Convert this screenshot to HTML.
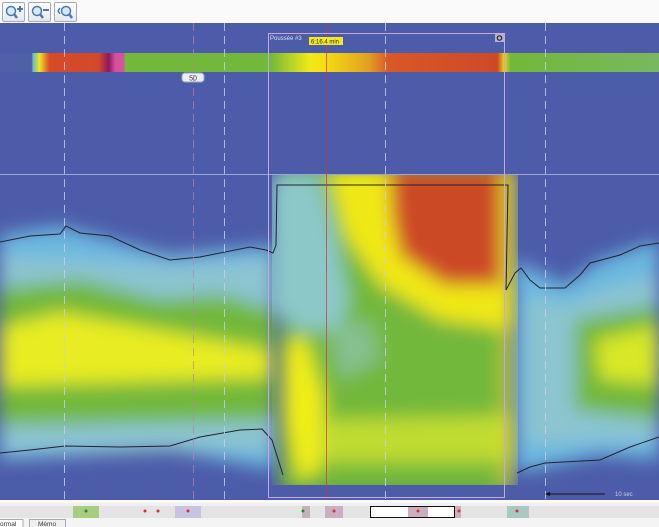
<!DOCTYPE html>
<html><head><style>
body{margin:0;width:659px;height:527px;overflow:hidden;background:#f0f0f0;font-family:"Liberation Sans",sans-serif;position:relative}
.tb{position:absolute;left:0;top:0;width:659px;height:23px;background:#fafafa;border-bottom:1px solid #ccc}
.btn{position:absolute;top:2px;width:21px;height:18px;border:1px solid #aab;border-radius:2px;background:linear-gradient(#fff,#e4e8ee)}
</style></head><body>
<div class="tb">
<div class="btn" style="left:2px"><svg width="21" height="18"><circle cx="8" cy="8" r="4.5" fill="#d8eaf8" stroke="#4a7ab8" stroke-width="1.5"/><line x1="11" y1="11" x2="14" y2="15" stroke="#4a7ab8" stroke-width="2.5"/><path d="M14 6h6M17 3v6" stroke="#3a6ab0" stroke-width="1.8"/></svg></div>
<div class="btn" style="left:28px"><svg width="21" height="18"><circle cx="8" cy="8" r="4.5" fill="#d8eaf8" stroke="#4a7ab8" stroke-width="1.5"/><line x1="11" y1="11" x2="14" y2="15" stroke="#4a7ab8" stroke-width="2.5"/><path d="M14 7h6" stroke="#3a6ab0" stroke-width="1.8"/></svg></div>
<div class="btn" style="left:54px"><svg width="21" height="18"><circle cx="11" cy="8" r="4.5" fill="#d8eaf8" stroke="#4a7ab8" stroke-width="1.5"/><line x1="14" y1="11" x2="17" y2="15" stroke="#4a7ab8" stroke-width="2.5"/><path d="M5 5l-2 3 2 3" fill="none" stroke="#3a6ab0" stroke-width="1.2"/></svg></div>
</div>
<svg style="position:absolute;left:0;top:23px" width="659" height="504" viewBox="0 23 659 504">
<defs>
<filter id="b" x="-20%" y="-20%" width="140%" height="140%"><feGaussianBlur stdDeviation="9"/></filter>
<filter id="b2" x="-30%" y="-30%" width="160%" height="160%"><feGaussianBlur stdDeviation="9"/></filter>
<clipPath id="cc"><rect x="272" y="175" width="246" height="310"/></clipPath>
<linearGradient id="bar" x1="0" x2="1">
<stop offset="0" stop-color="#5060a8"/><stop offset="0.048" stop-color="#5060a8"/>
<stop offset="0.05" stop-color="#6ab8d0"/><stop offset="0.06" stop-color="#e8e820"/><stop offset="0.075" stop-color="#d84a28"/>
<stop offset="0.15" stop-color="#d04a2a"/><stop offset="0.165" stop-color="#8a1a5a"/><stop offset="0.175" stop-color="#d850a0"/>
<stop offset="0.188" stop-color="#d850a0"/><stop offset="0.19" stop-color="#72b83a"/>
<stop offset="0.41" stop-color="#72b83a"/><stop offset="0.47" stop-color="#f0ea18"/><stop offset="0.49" stop-color="#f4e010"/>
<stop offset="0.56" stop-color="#e0a020"/><stop offset="0.59" stop-color="#d85828"/><stop offset="0.755" stop-color="#cc4a28"/>
<stop offset="0.765" stop-color="#f0d018"/><stop offset="0.775" stop-color="#72b83a"/><stop offset="1" stop-color="#78b860"/>
</linearGradient>
</defs>
<rect x="0" y="23" width="659" height="477" fill="#4c5ca8"/>
<rect x="0" y="53" width="659" height="19" fill="url(#bar)"/>
<rect x="182" y="73" width="22" height="9" rx="3" fill="#e8eef4" stroke="#9ab"/>
<text x="193" y="80.5" font-size="7" text-anchor="middle" fill="#333">50</text>
<line x1="0" y1="174.5" x2="659" y2="174.5" stroke="#9aa6d8"/>
<rect x="0" y="175" width="659" height="310" fill="#4c5ca8"/>
<g filter="url(#b)">
<path d="M0 235 L60 226 L170 255 L275 245 L275 470 L170 450 L0 460Z" fill="#6ab8e0"/>
<path d="M0 255 L170 265 L275 258 L275 450 L0 452Z" fill="#8cc4d0"/>
<path d="M0 288 L80 280 L160 300 L220 295 L275 310 L275 420 L0 425Z" fill="#72b83a"/>
<path d="M0 328 L60 312 L160 330 L270 350 L270 378 L0 386Z" fill="#e8ec20"/>
<path d="M515 260 L565 285 L600 260 L659 240 L659 460 L600 455 L530 470 L515 470Z" fill="#6ab8e0"/>
<path d="M525 295 L565 305 L600 290 L659 275 L659 440 L525 445Z" fill="#8cc4d0"/>
<path d="M575 320 L659 305 L659 420 L575 410Z" fill="#72b83a"/>
<path d="M595 340 L659 325 L659 385 L600 380Z" fill="#d8e828"/>
</g>
<g clip-path="url(#cc)">
<g filter="url(#b2)">
<rect x="280" y="165" width="232" height="330" fill="#72b83a"/>
<path d="M270 175 L318 175 L335 235 L350 300 L340 330 L300 330 L270 310Z" fill="#8cc8c8"/>
<path d="M330 330 L370 320 L380 360 L340 380Z" fill="#86c090"/>
<path d="M285 345 L305 335 L325 400 L320 470 L298 480 L285 420Z" fill="#f0ee18"/>
<path d="M320 420 L515 415 L515 462 L320 462Z" fill="#c0dc30"/>
<path d="M328 170 L515 170 L515 330 L440 320 L380 285 L345 235Z" fill="#f0e818"/>
<path d="M390 170 L502 170 L502 285 L445 285 L400 255 L392 215Z" fill="#cc4a26"/>
<path d="M504 170 L512 170 L512 490 L504 490Z" fill="#e8e020"/>
</g>
</g>
<path d="M0 242 L30 236 L60 234 L66 226 L80 233 L110 236 L140 250 L170 260 L200 257 L250 247 L266 250 L273 253 L276 245 L277 185 L508 185 L506 290 L515 273 L521 268 L530 280 L540 288 L565 288 L580 275 L590 263 L620 255 L640 246 L659 243" fill="none" stroke="#223" stroke-width="1"/>
<path d="M0 453 L30 450 L65 446 L120 447 L170 446 L200 437 L240 430 L262 429 L272 440 L283 475" fill="none" stroke="#223" stroke-width="1"/>
<path d="M517 473 L530 467 L545 463 L600 460 L630 447 L659 437" fill="none" stroke="#223" stroke-width="1"/>
<g stroke="#c8d0f0" stroke-dasharray="8,5" stroke-width="1" opacity="0.8">
<line x1="64.5" y1="23" x2="64.5" y2="500"/><line x1="224.5" y1="23" x2="224.5" y2="500"/>
<line x1="385.5" y1="23" x2="385.5" y2="500"/><line x1="545.5" y1="23" x2="545.5" y2="500"/>
</g>
<line x1="193.5" y1="23" x2="193.5" y2="500" stroke="#c080b0" stroke-dasharray="8,5" opacity="0.7"/>
<line x1="326.5" y1="23" x2="326.5" y2="500" stroke="#d83040" opacity="0.7"/>
<rect x="268.5" y="33.5" width="236" height="464" fill="none" stroke="#c8a8d8"/>
<text x="270" y="40" font-size="6" fill="#dde">Poussée #3</text>
<rect x="309" y="37" width="34" height="8" fill="#f4e820"/>
<text x="311" y="43.5" font-size="6" fill="#333">6:16.4 min</text>
<rect x="495" y="34" width="9" height="8" fill="#b8b0d0"/><circle cx="499.5" cy="38" r="2.2" fill="none" stroke="#222" stroke-width="1.2"/>
<line x1="547" y1="494" x2="605" y2="494" stroke="#111"/><path d="M545 494 L550 492 L550 496Z" fill="#111"/>
<text x="615" y="496" font-size="6" fill="#ccd">10 sec</text>
<rect x="0" y="500" width="659" height="3" fill="#fafafa"/>
<rect x="0" y="506" width="659" height="12" fill="#e4e4e4"/>
<rect x="73" y="506" width="26" height="12" fill="#a8cc80"/>
<rect x="175" y="506" width="26" height="12" fill="#c8c4e0"/>
<rect x="302" y="506" width="8" height="12" fill="#c8b0c0"/>
<rect x="325" y="506" width="18" height="12" fill="#c8b0c0"/>
<rect x="370.5" y="506.5" width="84" height="11" fill="#fff" stroke="#111"/>
<rect x="408" y="507" width="20" height="10" fill="#c8b0c0"/>
<rect x="455" y="506" width="6" height="12" fill="#c8b0c0"/>
<rect x="507" y="506" width="22" height="12" fill="#a8c8c0"/>
<g fill="#d83030"><circle cx="145" cy="511" r="1.5"/><circle cx="158" cy="511" r="1.5"/><circle cx="188" cy="511" r="1.5"/><circle cx="334" cy="511" r="1.5"/><circle cx="418" cy="511" r="1.5"/><circle cx="459" cy="511" r="1.5"/><circle cx="517" cy="511" r="1.5"/></g>
<g fill="#2a8a2a"><circle cx="86" cy="511" r="1.5"/><circle cx="303" cy="511" r="1.5"/></g>
<rect x="0" y="518" width="659" height="9" fill="#f4f4f4"/>
<rect x="-5" y="519.5" width="28" height="9" fill="#fff" stroke="#aaa"/>
<text x="0" y="526" font-size="6.5" fill="#333">ormal</text>
<rect x="29.5" y="519.5" width="36" height="9" fill="#f0f0f0" stroke="#aaa"/>
<text x="38" y="526" font-size="6.5" fill="#333">Mémo</text>
</svg>
</body></html>
